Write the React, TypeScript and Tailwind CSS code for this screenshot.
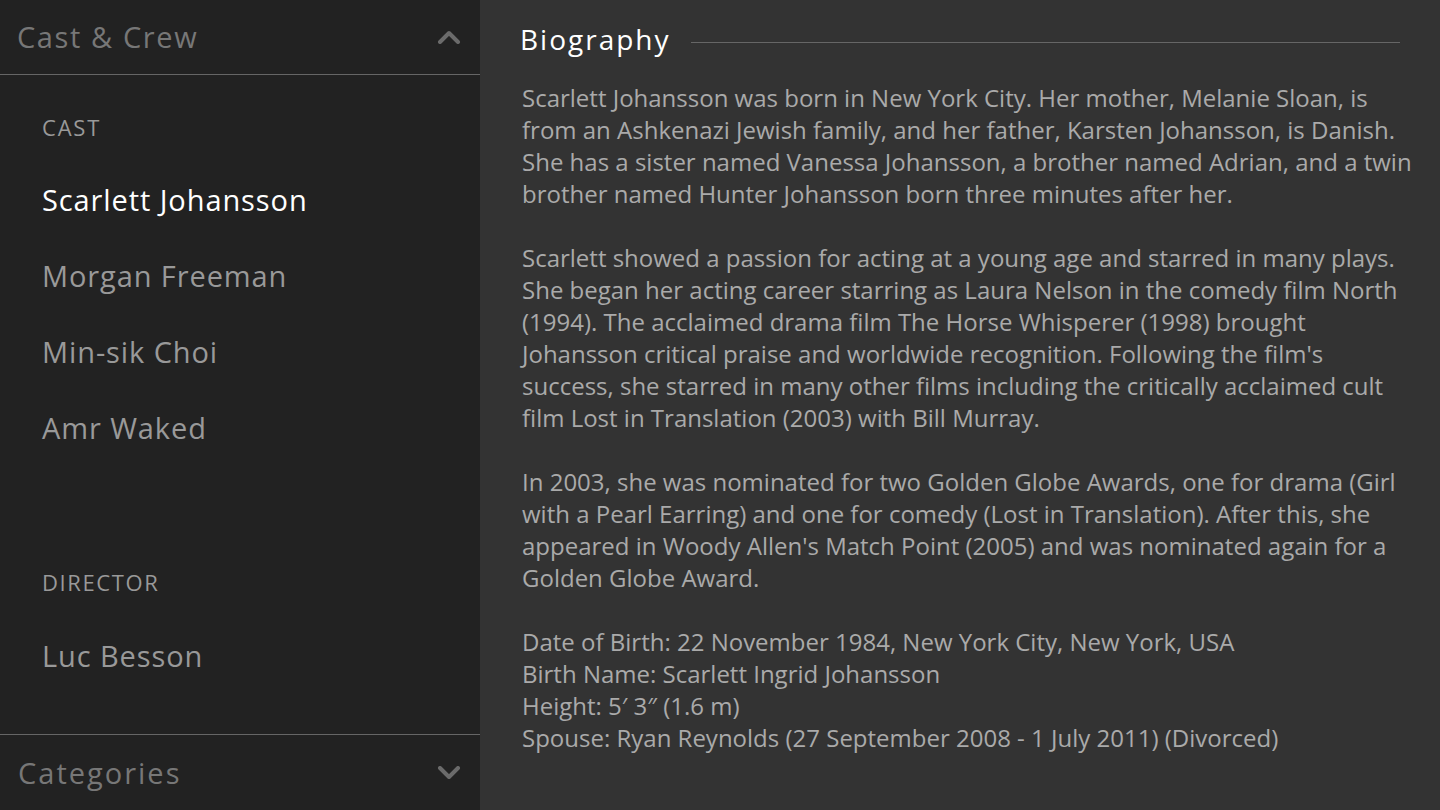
import React from "react";

const Chevron = ({ up }: { up?: boolean }) => (
  <svg width="24" height="14" viewBox="0 0 24 14" className="block">
    <path
      d={up ? "M3 12 L12 3 L21 12" : "M3 2 L12 11 L21 2"}
      fill="none"
      stroke="#6b6b6b"
      strokeWidth="4"
      strokeLinecap="round"
      strokeLinejoin="round"
    />
  </svg>
);

const bio: string[][] = [
  [
    "Scarlett Johansson was born in New York City. Her mother, Melanie Sloan, is",
    "from an Ashkenazi Jewish family, and her father, Karsten Johansson, is Danish.",
    "She has a sister named Vanessa Johansson, a brother named Adrian, and a twin",
    "brother named Hunter Johansson born three minutes after her.",
  ],
  [
    "Scarlett showed a passion for acting at a young age and starred in many plays.",
    "She began her acting career starring as Laura Nelson in the comedy film North",
    "(1994). The acclaimed drama film The Horse Whisperer (1998) brought",
    "Johansson critical praise and worldwide recognition. Following the film's",
    "success, she starred in many other films including the critically acclaimed cult",
    "film Lost in Translation (2003) with Bill Murray.",
  ],
  [
    "In 2003, she was nominated for two Golden Globe Awards, one for drama (Girl",
    "with a Pearl Earring) and one for comedy (Lost in Translation). After this, she",
    "appeared in Woody Allen's Match Point (2005) and was nominated again for a",
    "Golden Globe Award.",
  ],
  [
    "Date of Birth: 22 November 1984, New York City, New York, USA",
    "Birth Name: Scarlett Ingrid Johansson",
    "Height: 5\u2032 3\u2033 (1.6 m)",
    "Spouse: Ryan Reynolds (27 September 2008 - 1 July 2011) (Divorced)",
  ],
];

export default function App() {
  return (
    <div
      className="flex h-[810px] w-[1440px] overflow-hidden"
      style={{ fontFamily: "'Open Sans', 'Noto Sans', sans-serif" }}
    >
      <aside className="flex h-full w-[480px] shrink-0 flex-col bg-[#222222]">
        <div className="flex h-[75px] items-center justify-between border-b border-[#666666] pl-[17px] pr-[19px]">
          <span className="text-[29px] tracking-[1.6px] text-[#777777]">Cast &amp; Crew</span>
          <Chevron up />
        </div>
        <div className="flex flex-1 flex-col pl-[42px]">
          <div className="mt-[39px] text-[22px] leading-[26px] tracking-[1.8px] text-[#999999]">CAST</div>
          <div className="mt-[45px] flex flex-col gap-[46px] text-[29px] leading-[30px] tracking-[0.9px]">
            <span className="text-white">Scarlett Johansson</span>
            <span className="text-[#999999]">Morgan Freeman</span>
            <span className="text-[#999999]">Min-sik Choi</span>
            <span className="text-[#999999]">Amr Waked</span>
          </div>
          <div className="mt-[126px] text-[22px] leading-[26px] tracking-[1.6px] text-[#999999]">DIRECTOR</div>
          <div className="mt-[46px] text-[29px] leading-[30px] tracking-[0.9px] text-[#999999]">Luc Besson</div>
        </div>
        <div className="flex h-[76px] items-center justify-between border-t border-[#666666] pl-[18px] pr-[19px]">
          <span className="text-[29px] tracking-[2px] text-[#777777]">Categories</span>
          <Chevron />
        </div>
      </aside>
      <main className="flex h-full min-w-0 flex-1 flex-col overflow-hidden bg-[#333333] pl-[40px] pr-[40px]">
        <div className="flex h-[78px] items-center gap-[20px]">
          <h1 className="shrink-0 text-[28px] tracking-[2px] text-white">Biography</h1>
          <div className="mt-[6px] h-px min-w-0 flex-1 bg-[#666666]"></div>
        </div>
        <div className="flex min-w-0 flex-col gap-[32px] pl-[2px] pt-[4px] text-[24px] leading-[32px] text-[#aaaaaa]">
          {bio.map((p, i) => (
            <p key={i}>
              {p.map((l, j) => (
                <span key={j} className="block whitespace-nowrap">
                  {l}
                </span>
              ))}
            </p>
          ))}
        </div>
      </main>
    </div>
  );
}
